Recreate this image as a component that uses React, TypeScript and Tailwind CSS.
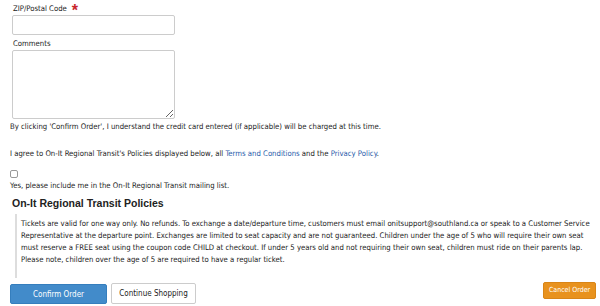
import React from 'react';

export default function App() {
  return (
    <div className="w-[600px] h-[306px] overflow-hidden bg-white text-[#222] font-['DejaVu_Sans_Condensed','DejaVu_Sans',sans-serif] text-[7.7px] leading-[9px]">
      <div className="pl-[10px] pr-[4px] pt-[4px]">
        <div className="pl-[3px]">
          <div className="flex items-center gap-[5px] h-[9px]">
            <span>ZIP/Postal Code</span>
            <span className="text-[#c8262b] text-[16px] leading-[9px] pt-[4px] font-bold font-['Liberation_Sans',sans-serif]">*</span>
          </div>
          <input className="mt-[2px] block w-[163px] h-[20px] border border-[#ccc] rounded-[2px] -ml-[1px]" />
          <div className="mt-[4px] h-[9px]">Comments</div>
          <textarea className="mt-[2px] block w-[163px] h-[69px] border border-[#ccc] rounded-[2px] -ml-[1px]" />
        </div>
        <p className="mt-[3px]">
          By clicking 'Confirm Order', I understand the credit card entered (if applicable) will be charged at this time.
        </p>
        <p className="mt-[18px]">
          I agree to On-It Regional Transit's Policies displayed below, all{' '}
          <a className="text-[#2a5caa]">Terms and Conditions</a> and the{' '}
          <a className="text-[#2a5caa]">Privacy Policy</a>.
        </p>
        <input type="checkbox" className="mt-[12px] block w-[8px] h-[8px] appearance-none border border-[#999] rounded-[2px]" />
        <p className="mt-[3px]">Yes, please include me in the On-It Regional Transit mailing list.</p>
        <h3 className="mt-[7px] ml-[2px] font-['Liberation_Sans',sans-serif] font-bold text-[10.5px] leading-[12px] text-[#222]">
          On-It Regional Transit Policies
        </h3>
        <blockquote className="mt-[5px] ml-[5px] border-l-2 border-[#ddd] pl-[4px] pt-[4px] pb-[12px] leading-[12px]">
          Tickets are valid for one way only. No refunds. To exchange a date/departure time, customers must email onitsupport@southland.ca or speak to a Customer Service Representative at the departure point. Exchanges are limited to seat capacity and are not guaranteed. Children under the age of 5 who will require their own seat must reserve a FREE seat using the coupon code CHILD at checkout. If under 5 years old and not requiring their own seat, children must ride on their parents lap. Please note, children over the age of 5 are required to have a regular ticket.
        </blockquote>
        <div className="mt-[6px] flex items-start">
          <button className="w-[97px] h-[20px] bg-[#428bca] border border-[#357ebd] rounded-[2px] text-white text-[8px]">
            Confirm Order
          </button>
          <button className="ml-[4px] w-[85px] h-[21px] -mt-[1px] bg-white border border-[#ccc] rounded-[2px] text-[#222] text-[8px]">
            Continue Shopping
          </button>
          <button className="ml-auto -mt-[2px] w-[53px] h-[17px] bg-[#e8921e] border border-[#d98517] rounded-[2px] text-white text-[7px]">
            Cancel Order
          </button>
        </div>
      </div>
    </div>
  );
}
